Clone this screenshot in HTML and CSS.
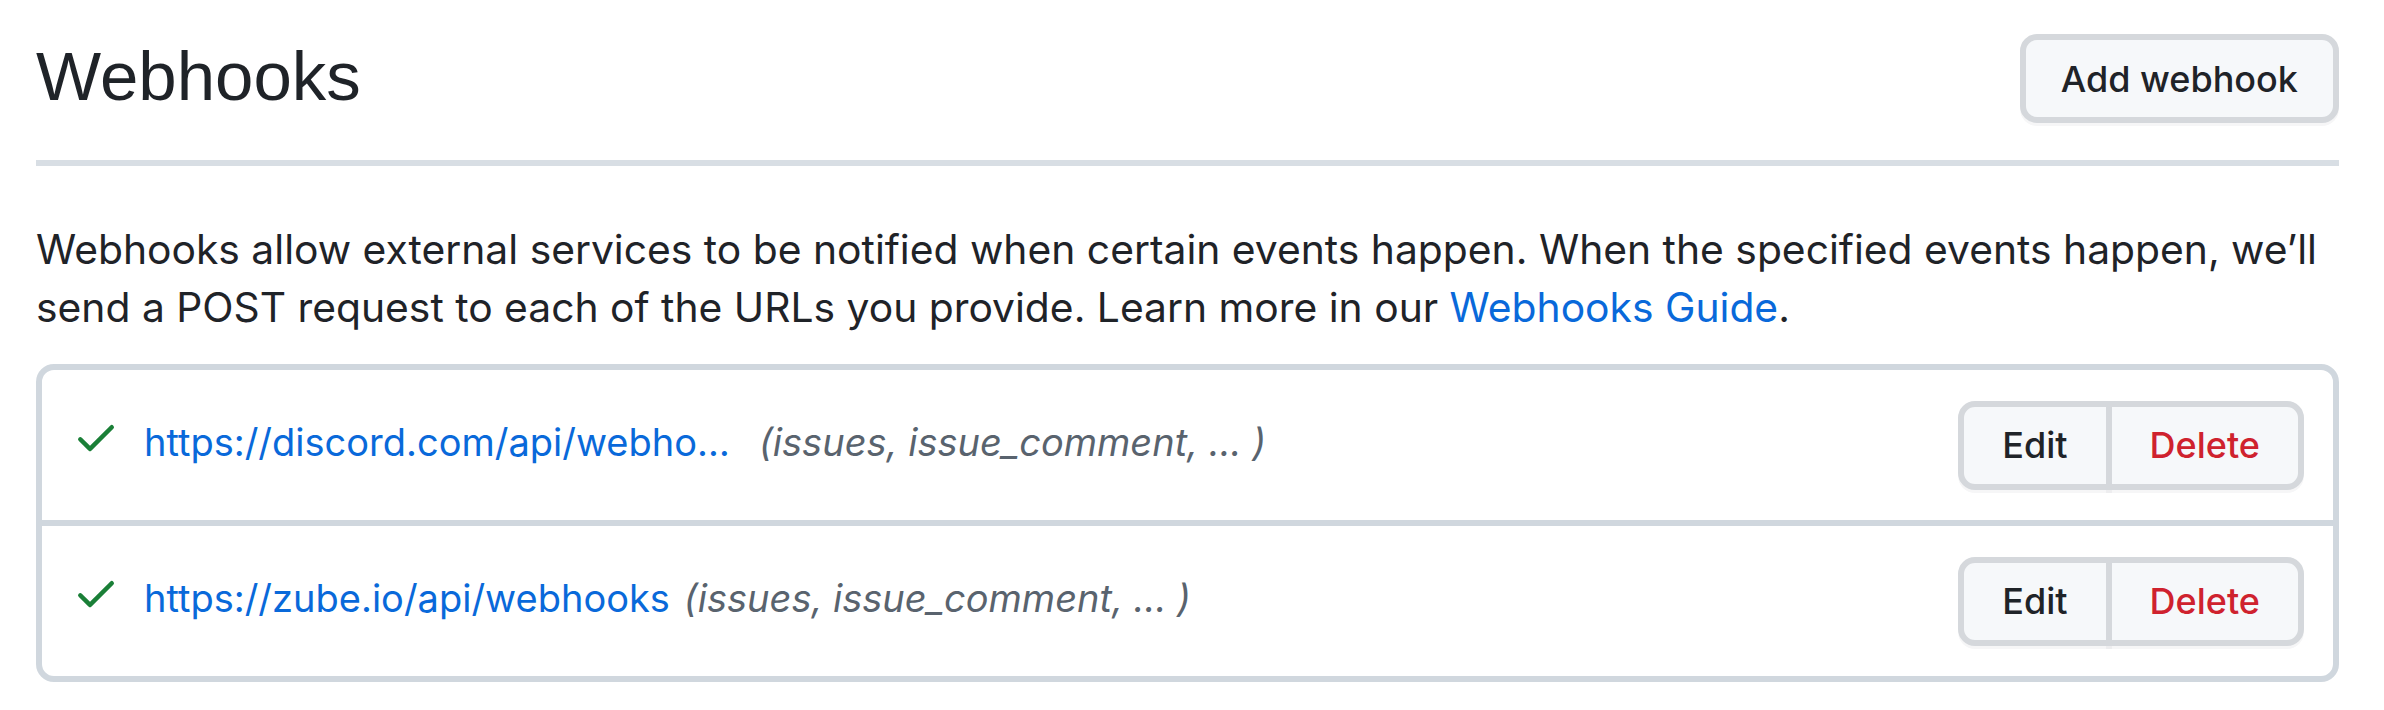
FILE: index.html
```html
<!DOCTYPE html>
<html lang="en">
<head>
<meta charset="utf-8">
<title>Webhooks</title>
<link rel="stylesheet" href="styles.css">
</head>
<body>
<main class="page">
  <div class="subhead">
    <h2 class="subhead-heading">Webhooks</h2>
    <a class="btn" href="#">Add webhook</a>
  </div>
  <p class="intro">Webhooks allow external services to be notified when certain events happen. When the specified events happen, we’ll send a POST request to each of the URLs you provide. Learn more in our <a class="link" href="#">Webhooks Guide</a>.</p>
  <div class="box">
    <div class="box-row">
      <div class="hook">
        <svg class="check" viewBox="0 0 16 16" width="48" height="48" aria-hidden="true"><path d="M13.78 4.22a.75.75 0 0 1 0 1.06l-7.25 7.25a.75.75 0 0 1-1.06 0L2.22 9.28a.751.751 0 0 1 .018-1.042.751.751 0 0 1 1.042-.018L6 10.940l6.72-6.72a.75.75 0 0 1 1.06 0Z"></path></svg>
        <a class="hook-url truncate" href="#">https://discord.com/api/webhooks/1087263544/Zk3wHq</a>
        <em class="events">(issues, issue_comment, ... )</em>
      </div>
      <div class="btn-group">
        <a class="btn group-btn" href="#">Edit</a>
        <button class="btn group-btn danger" type="button">Delete</button>
      </div>
    </div>
    <div class="box-row">
      <div class="hook">
        <svg class="check" viewBox="0 0 16 16" width="48" height="48" aria-hidden="true"><path d="M13.78 4.22a.75.75 0 0 1 0 1.06l-7.25 7.25a.75.75 0 0 1-1.06 0L2.22 9.28a.751.751 0 0 1 .018-1.042.751.751 0 0 1 1.042-.018L6 10.940l6.72-6.72a.75.75 0 0 1 1.06 0Z"></path></svg>
        <a class="hook-url truncate" href="#">https://zube.io/api/webhooks</a>
        <em class="events">(issues, issue_comment, ... )</em>
      </div>
      <div class="btn-group">
        <a class="btn group-btn" href="#">Edit</a>
        <button class="btn group-btn danger" type="button">Delete</button>
      </div>
    </div>
  </div>
</main>
</body>
</html>
```

FILE: styles.css
```css
* { box-sizing: border-box; }

html, body {
  margin: 0;
  background: #ffffff;
}

body {
  font-family: Inter, "Noto Sans", "Liberation Sans", sans-serif;
  color: #1f2328;
}

.page {
  padding: 34px 45px 0 36px;
}

.subhead {
  display: flex;
  justify-content: space-between;
  align-items: flex-start;
  padding-bottom: 37px;
  border-bottom: 6px solid #d8dee4;
}

.subhead-heading {
  margin: 0;
  font-family: "Liberation Sans", Arial, sans-serif;
  font-weight: 400;
  font-size: 69px;
  line-height: 86px;
  color: #1f2328;
}

.btn {
  display: inline-flex;
  align-items: center;
  justify-content: center;
  height: 89px;
  padding: 0 35px;
  font-family: Inter, "Noto Sans", sans-serif;
  font-size: 36px;
  font-weight: 500;
  color: #1f2328;
  text-decoration: none;
  background: #f6f8fa;
  border: 6px solid #d5d8dc;
  border-radius: 17px;
  box-shadow: 0 3px 0 rgba(31, 35, 40, 0.04);
  cursor: pointer;
}

.intro {
  margin: 54px 0 28px;
  font-size: 40.8px;
  line-height: 58px;
  color: #1f2328;
}

.link {
  color: #0969da;
  text-decoration: none;
}

.box {
  border: 6px solid #d0d7de;
  border-radius: 18px;
}

.box-row {
  display: flex;
  align-items: center;
  justify-content: space-between;
  height: 150px;
  padding: 0 29px 0 30px;
}

.box-row + .box-row {
  height: 156px;
  border-top: 6px solid #d0d7de;
}

.hook {
  display: flex;
  align-items: center;
  font-size: 38px;
  min-width: 0;
  margin-bottom: 6px;
}

.check {
  flex: none;
  fill: #1a7f37;
  margin: 0 24px 10px 0;
}

.hook-url {
  color: #0969da;
  text-decoration: none;
  margin-right: 14px;
}

.truncate {
  display: inline-block;
  max-width: 601px;
  overflow: hidden;
  text-overflow: ellipsis;
  white-space: nowrap;
}

.events {
  font-style: italic;
  color: #59636e;
  white-space: nowrap;
}

.btn-group {
  display: flex;
  flex: none;
}

.group-btn {
  padding: 0 38px;
}

.group-btn:first-child {
  border-top-right-radius: 0;
  border-bottom-right-radius: 0;
}

.group-btn + .group-btn {
  margin-left: -6px;
  border-top-left-radius: 0;
  border-bottom-left-radius: 0;
}

.danger {
  color: #cf222e;
}
```
